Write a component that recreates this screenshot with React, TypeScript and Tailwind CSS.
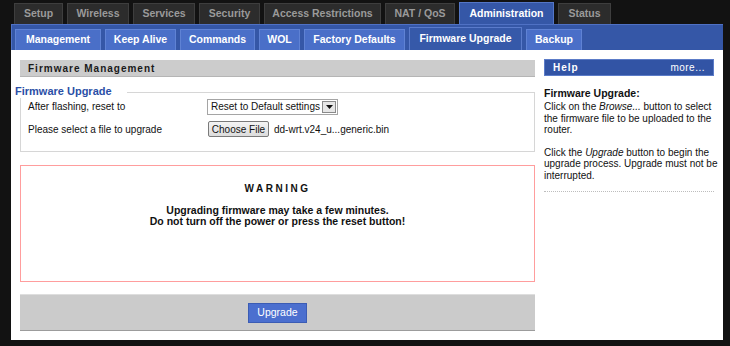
import React from "react";

const topTabs = [
  { label: "Setup", w: 49 },
  { label: "Wireless", w: 62 },
  { label: "Services", w: 62 },
  { label: "Security", w: 61 },
  { label: "Access Restrictions", w: 117 },
  { label: "NAT / QoS", w: 70 },
  { label: "Administration", w: 95, active: true },
  { label: "Status", w: 53 },
];

const subTabs = [
  { label: "Management", w: 86 },
  { label: "Keep Alive", w: 71 },
  { label: "Commands", w: 75 },
  { label: "WOL", w: 41 },
  { label: "Factory Defaults", w: 101 },
  { label: "Firmware Upgrade", w: 113, active: true },
  { label: "Backup", w: 56 },
];

export default function App() {
  return (
    <div
      className="w-[730px] h-[346px] bg-[#121212] overflow-hidden text-[10px] text-[#111]"
      style={{ fontFamily: '"Liberation Sans", Arial, sans-serif' }}
    >
      {/* top tabs */}
      <div className="flex items-end h-[24px] pl-[14px] gap-[4px]">
        {topTabs.map((t) =>
          t.active ? (
            <div
              key={t.label}
              style={{ width: t.w }}
              className="h-[22px] flex items-center justify-center bg-[#3557a7] border border-b-0 border-[#5476c6] text-white font-bold text-[10.5px]"
            >
              {t.label}
            </div>
          ) : (
            <div
              key={t.label}
              style={{ width: t.w }}
              className="h-[21px] flex items-center justify-center bg-[#2c2c2c] border border-b-0 border-[#3e3e3e] text-[#9a9a9a] font-bold text-[10.5px]"
            >
              {t.label}
            </div>
          )
        )}
      </div>

      <div className="ml-[11px] w-[712px]">
        {/* sub tabs bar */}
        <div className="h-[26px] bg-[#3557a7] border-t border-l border-[#4f71c4] flex items-end pl-[3px] gap-[4px]">
          {subTabs.map((t) =>
            t.active ? (
              <div
                key={t.label}
                style={{ width: t.w }}
                className="h-[23px] flex items-center justify-center bg-[#3659a9] border border-b-0 border-[#5a7bcb] text-white font-bold text-[10.5px]"
              >
                {t.label}
              </div>
            ) : (
              <div
                key={t.label}
                style={{ width: t.w }}
                className="h-[21px] flex items-center justify-center bg-[#4a6fc8] border border-b-0 border-[#5f82d4] text-white font-bold text-[10.5px]"
              >
                {t.label}
              </div>
            )
          )}
        </div>

        {/* white panel */}
        <div className="h-[290px] bg-white flex">
          {/* left column */}
          <div className="ml-[9px] w-[515px] flex flex-col">
            <div className="mt-[10px] h-[17px] bg-[#cccccc] border-b border-[#b5b5b5] flex items-center pl-[8px] font-bold tracking-[1px] text-[#1a1a1a]">
              Firmware Management
            </div>

            {/* fieldset */}
            <div className="relative mt-[15px] h-[60px] border border-[#d6d6d6]">
              <div className="absolute left-[-6px] top-[-8px] bg-white pr-[15px] font-bold text-[11px] text-[#2b4fa6] leading-[13px]">
                Firmware Upgrade
              </div>
              <div className="flex items-center h-[17px] mt-[5px] pl-[7px]">
                <div className="w-[179px]">After flashing, reset to</div>
                <div className="w-[131px] h-[16px] border border-[#a5a5a5] flex items-center justify-between pl-[3px] pr-[1px]">
                  <span>Reset to Default settings</span>
                  <span className="w-[14px] h-[12px] border border-[#8a8a8a] bg-[#e6e6e6] flex items-center justify-center">
                    <svg width="7" height="4" viewBox="0 0 7 4">
                      <path d="M0 0 L7 0 L3.5 4 Z" fill="#111" />
                    </svg>
                  </span>
                </div>
              </div>
              <div className="flex items-center h-[16px] mt-[6px] pl-[7px]">
                <div className="w-[180px]">Please select a file to upgrade</div>
                <div className="w-[61px] h-[16px] border border-[#7a7a7a] rounded-[2px] bg-gradient-to-b from-[#f4f4f4] to-[#dcdcdc] flex items-center justify-center">
                  Choose File
                </div>
                <span className="ml-[5px]">dd-wrt.v24_u...generic.bin</span>
              </div>
            </div>

            {/* warning */}
            <div className="mt-[13px] h-[117px] border border-[#ff9d9d] flex flex-col items-center font-bold">
              <div className="mt-[17px] leading-[12px] tracking-[2.5px]">WARNING</div>
              <div className="mt-[10px] leading-[11px] text-center text-[10.5px]">
                Upgrading firmware may take a few minutes.
                <br />
                Do not turn off the power or press the reset button!
              </div>
            </div>

            {/* button bar */}
            <div className="mt-[12px] h-[37px] bg-[#cbcbcb] border-t border-t-[#dedede] border-b border-b-[#9c9c9c] flex items-center justify-center">
              <div className="w-[59px] h-[20px] bg-[#4b6fcf] border border-[#3b5cb4] text-white flex items-center justify-center text-[10.5px]">
                Upgrade
              </div>
            </div>
          </div>

          {/* right column */}
          <div className="ml-[9px] w-[170px] flex flex-col">
            <div className="mt-[9px] h-[17px] bg-[#3254a5] border border-[#5c7cc8] flex items-center justify-between pl-[8px] pr-[8px] text-white">
              <span className="font-bold tracking-[1px]">Help</span>
              <span className="tracking-[0.5px]">more...</span>
            </div>
            <div className="mt-[11px] font-bold text-[10.5px] leading-[12px]">Firmware Upgrade:</div>
            <div className="mt-[2px] mr-[-6px] leading-[11.5px]">
              Click on the <i>Browse...</i> button to select the firmware file to be uploaded to the router.
            </div>
            <div className="mt-[11px] mr-[-6px] leading-[11.5px]">
              Click the <i>Upgrade</i> button to begin the upgrade process. Upgrade must not be interrupted.
            </div>
            <div className="mt-[10px] border-t border-dotted border-[#bdbdbd]" />
          </div>
        </div>
      </div>
    </div>
  );
}
